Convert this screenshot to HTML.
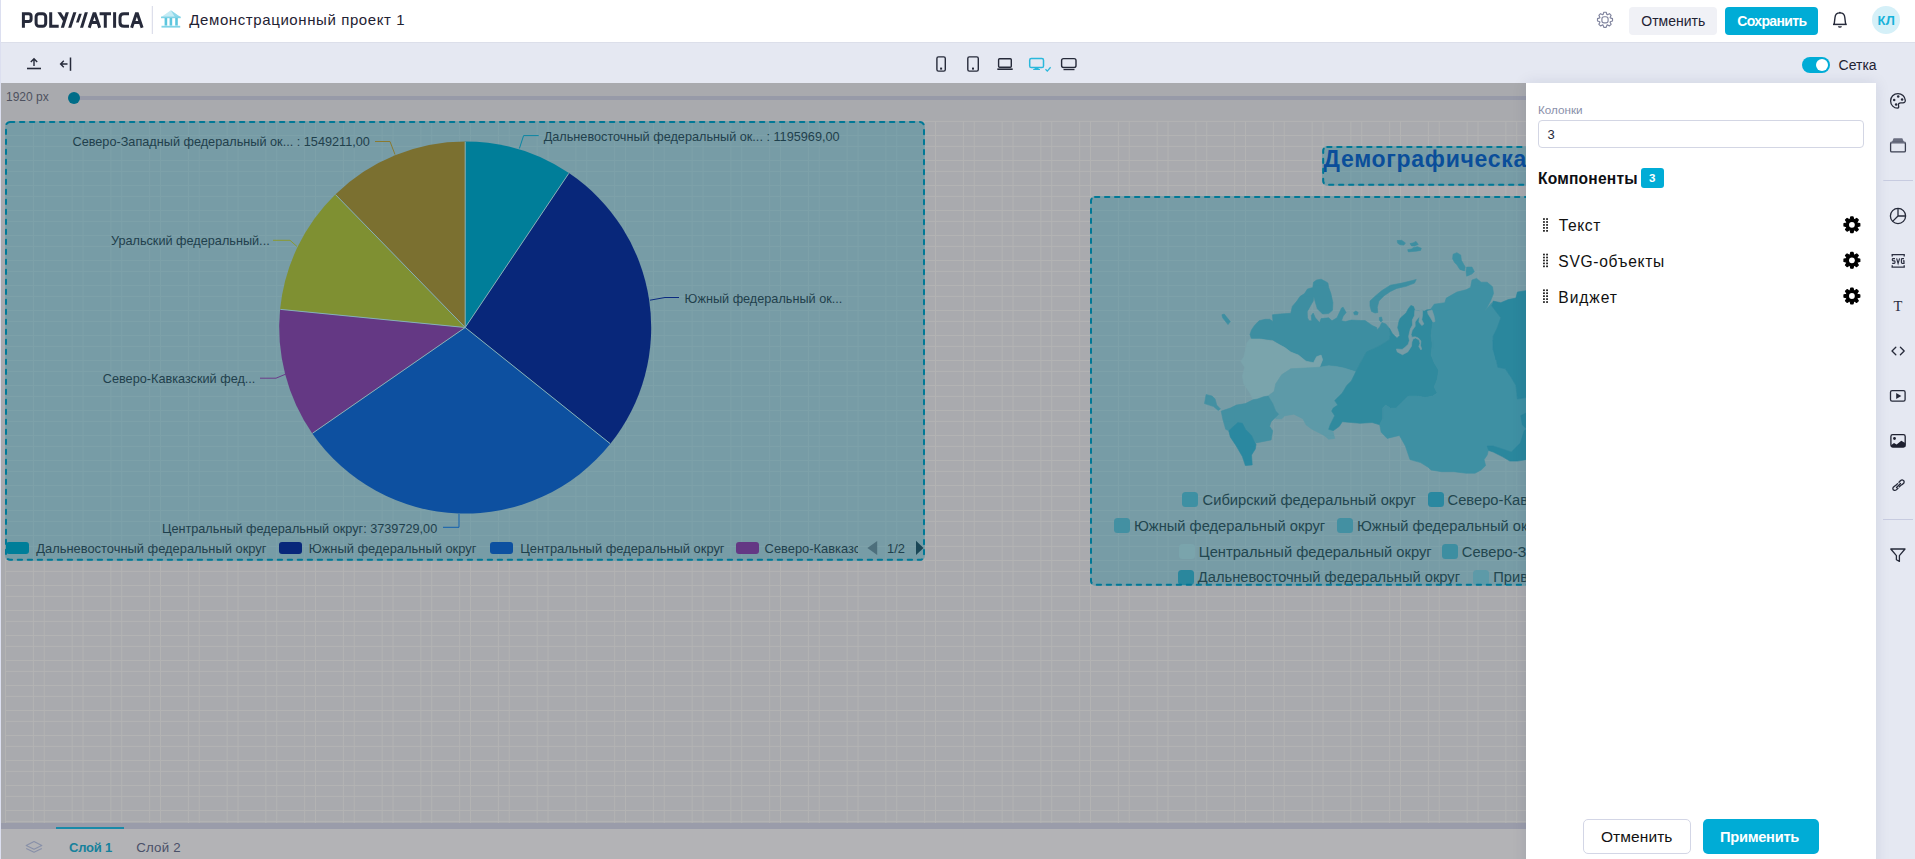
<!DOCTYPE html>
<html><head><meta charset="utf-8">
<style>
*{box-sizing:border-box;margin:0;padding:0}
html,body{width:1915px;height:859px;overflow:hidden;background:#e5e8f2;font-family:"Liberation Sans", sans-serif}
.a{position:absolute}
.t{position:absolute;white-space:nowrap;font-family:"Liberation Sans", sans-serif}
</style></head><body>
<div class="a" style="left:1px;top:0;width:1914px;height:43px;background:#fff;border-bottom:1px solid #dcdfea"></div>
<div class="a" style="left:1px;top:43px;width:1914px;height:40px;background:#e5e8f2"></div>
<div class="a" style="left:1px;top:83px;width:1525px;height:740px;background:#a9aaae;overflow:hidden"></div>
<svg class="a" style="left:0;top:0" width="1526" height="859" viewBox="0 0 1526 859"><path d="M5.50 121.40V823M33.40 121.40V823M44.25 121.40V823M72.15 121.40V823M83.00 121.40V823M110.90 121.40V823M121.75 121.40V823M149.65 121.40V823M160.50 121.40V823M188.40 121.40V823M199.25 121.40V823M227.15 121.40V823M238.00 121.40V823M265.90 121.40V823M276.75 121.40V823M304.65 121.40V823M315.50 121.40V823M343.40 121.40V823M354.25 121.40V823M382.15 121.40V823M393.00 121.40V823M420.90 121.40V823M431.75 121.40V823M459.65 121.40V823M470.50 121.40V823M498.40 121.40V823M509.25 121.40V823M537.15 121.40V823M548.00 121.40V823M575.90 121.40V823M586.75 121.40V823M614.65 121.40V823M625.50 121.40V823M653.40 121.40V823M664.25 121.40V823M692.15 121.40V823M703.00 121.40V823M730.90 121.40V823M741.75 121.40V823M769.65 121.40V823M780.50 121.40V823M808.40 121.40V823M819.25 121.40V823M847.15 121.40V823M858.00 121.40V823M885.90 121.40V823M896.75 121.40V823M924.65 121.40V823M935.50 121.40V823M963.40 121.40V823M974.25 121.40V823M1002.15 121.40V823M1013.00 121.40V823M1040.90 121.40V823M1051.75 121.40V823M1079.65 121.40V823M1090.50 121.40V823M1118.40 121.40V823M1129.25 121.40V823M1157.15 121.40V823M1168.00 121.40V823M1195.90 121.40V823M1206.75 121.40V823M1234.65 121.40V823M1245.50 121.40V823M1273.40 121.40V823M1284.25 121.40V823M1312.15 121.40V823M1323.00 121.40V823M1350.90 121.40V823M1361.75 121.40V823M1389.65 121.40V823M1400.50 121.40V823M1428.40 121.40V823M1439.25 121.40V823M1467.15 121.40V823M1478.00 121.40V823M1505.90 121.40V823M1516.75 121.40V823M5.50 121.40H1530M5.50 135.50H1530M5.50 146.40H1530M5.50 160.50H1530M5.50 171.40H1530M5.50 185.50H1530M5.50 196.40H1530M5.50 210.50H1530M5.50 221.40H1530M5.50 235.50H1530M5.50 246.40H1530M5.50 260.50H1530M5.50 271.40H1530M5.50 285.50H1530M5.50 296.40H1530M5.50 310.50H1530M5.50 321.40H1530M5.50 335.50H1530M5.50 346.40H1530M5.50 360.50H1530M5.50 371.40H1530M5.50 385.50H1530M5.50 396.40H1530M5.50 410.50H1530M5.50 421.40H1530M5.50 435.50H1530M5.50 446.40H1530M5.50 460.50H1530M5.50 471.40H1530M5.50 485.50H1530M5.50 496.40H1530M5.50 510.50H1530M5.50 521.40H1530M5.50 535.50H1530M5.50 546.40H1530M5.50 560.50H1530M5.50 571.40H1530M5.50 585.50H1530M5.50 596.40H1530M5.50 610.50H1530M5.50 621.40H1530M5.50 635.50H1530M5.50 646.40H1530M5.50 660.50H1530M5.50 671.40H1530M5.50 685.50H1530M5.50 696.40H1530M5.50 710.50H1530M5.50 721.40H1530M5.50 735.50H1530M5.50 746.40H1530M5.50 760.50H1530M5.50 771.40H1530M5.50 785.50H1530M5.50 796.40H1530M5.50 810.50H1530M5.50 821.40H1530" stroke="#b3b3b3" stroke-width="1" fill="none"/></svg>
<div class="a" style="left:1px;top:823px;width:1525px;height:6px;background:#9a9caa"></div>
<div class="a" style="left:56px;top:826.5px;width:68px;height:2.5px;background:#1a8aa8"></div>
<div class="a" style="left:1px;top:829px;width:1525px;height:30px;background:#b3b3b6"></div>
<div class="a" style="left:74px;top:96px;width:1452px;height:3.6px;background:#979aa8"></div>
<div class="a" style="left:68px;top:92px;width:12px;height:12px;border-radius:50%;background:#006d88"></div>
<div class="t" style="left:6.00px;top:91.34px;font-size:12px;line-height:12px;color:#4e5260;font-weight:normal;">1920 px</div>
<div class="a" style="left:5px;top:121px;width:920px;height:440px;background:rgba(40,134,154,0.39);border-radius:5px"></div>
<svg class="a" style="left:0;top:0" width="1526" height="859" viewBox="0 0 1526 859"><path d="M465.2 327.5L465.20 141.50A186 186 0 0 1 568.94 173.12Z" fill="#007e99"/><path d="M465.2 327.5L568.94 173.12A186 186 0 0 1 610.36 443.80Z" fill="#08277a"/><path d="M465.2 327.5L610.36 443.80A186 186 0 0 1 312.28 433.39Z" fill="#0d50a0"/><path d="M465.2 327.5L312.28 433.39A186 186 0 0 1 280.09 309.35Z" fill="#643884"/><path d="M465.2 327.5L280.09 309.35A186 186 0 0 1 335.29 194.38Z" fill="#7f9032"/><path d="M465.2 327.5L335.29 194.38A186 186 0 0 1 465.20 141.50Z" fill="#7b7030"/><path d="M465.2 327.5L465.20 141.80M465.2 327.5L568.77 173.37M465.2 327.5L610.13 443.61M465.2 327.5L312.53 433.22M465.2 327.5L280.39 309.38M465.2 327.5L335.50 194.60" stroke="#86b0b8" stroke-width="1" fill="none"/></svg>
<div class="t" style="left:72.50px;top:136.35px;font-size:12.7px;line-height:12.7px;color:#1f404c;font-weight:normal;">Северо-Западный федеральный ок... : 1549211,00</div>
<div class="t" style="left:543.70px;top:131.45px;font-size:12.7px;line-height:12.7px;color:#1f404c;font-weight:normal;">Дальневосточный федеральный ок... : 1195969,00</div>
<div class="t" style="left:110.90px;top:235.45px;font-size:12.7px;line-height:12.7px;color:#1f404c;font-weight:normal;">Уральский федеральный...</div>
<div class="t" style="left:684.60px;top:293.05px;font-size:12.7px;line-height:12.7px;color:#1f404c;font-weight:normal;">Южный федеральный ок...</div>
<div class="t" style="left:102.80px;top:373.45px;font-size:12.7px;line-height:12.7px;color:#1f404c;font-weight:normal;">Северо-Кавказский фед...</div>
<div class="t" style="left:162.00px;top:523.05px;font-size:12.7px;line-height:12.7px;color:#1f404c;font-weight:normal;">Центральный федеральный округ: 3739729,00</div>
<svg class="a" style="left:0;top:0" width="1526" height="859" viewBox="0 0 1526 859"><path d="M519.4 148.5L523.6 135.6H538.7" stroke="#0a86a4" stroke-width="1" fill="none"/><path d="M395 154.5L390 141.5H375" stroke="#8a7a30" stroke-width="1" fill="none"/><path d="M297 246.5L290 240.3H273" stroke="#8a9a30" stroke-width="1" fill="none"/><path d="M650 300.2L665 297.5H679" stroke="#0a2a80" stroke-width="1" fill="none"/><path d="M286 374L276 378.2H260" stroke="#6a3a8a" stroke-width="1" fill="none"/><path d="M459 514V527.3H443" stroke="#1060b0" stroke-width="1" fill="none"/></svg>
<svg class="a" style="left:0;top:0" width="1526" height="859" viewBox="0 0 1526 859"><rect x="6" y="122" width="918" height="437.8" rx="4" fill="none" stroke="#007896" stroke-width="2" stroke-dasharray="4.3 5.7" stroke-linecap="round"/></svg>
<div class="a" style="left:6.1px;top:542.3px;width:23px;height:11.5px;border-radius:3px;background:#007e99"></div>
<div class="a" style="left:279.4px;top:542.3px;width:23px;height:11.5px;border-radius:3px;background:#08277a"></div>
<div class="a" style="left:490.3px;top:542.3px;width:23px;height:11.5px;border-radius:3px;background:#0d50a0"></div>
<div class="a" style="left:735.5px;top:542.3px;width:23px;height:11.5px;border-radius:3px;background:#643884"></div>
<div class="a" style="left:764px;top:538px;width:94px;height:20px;overflow:hidden"><div class="t" style="left:0.60px;top:4.58px;font-size:12.9px;line-height:12.9px;color:#1f404c;font-weight:normal;">Северо-Кавказский федеральный округ</div>
</div>
<div class="t" style="left:36.30px;top:542.58px;font-size:12.9px;line-height:12.9px;color:#1f404c;font-weight:normal;">Дальневосточный федеральный округ</div>
<div class="t" style="left:308.70px;top:542.58px;font-size:12.9px;line-height:12.9px;color:#1f404c;font-weight:normal;">Южный федеральный округ</div>
<div class="t" style="left:520.20px;top:542.58px;font-size:12.9px;line-height:12.9px;color:#1f404c;font-weight:normal;">Центральный федеральный округ</div>
<div class="t" style="left:887.00px;top:542.58px;font-size:12.9px;line-height:12.9px;color:#1f404c;font-weight:normal;">1/2</div>
<svg class="a" style="left:0;top:0" width="1526" height="859" viewBox="0 0 1526 859"><path d="M877.2 540.9V555.1L867.4 548Z" fill="#4d6f7c"/><path d="M916 540.8V555.1L923.5 548Z" fill="#1a4656"/></svg>
<div class="a" style="left:1090px;top:196px;width:500px;height:390px;background:rgba(40,134,154,0.39);border-radius:5px"></div>
<svg class="a" style="left:0;top:0" width="1526" height="859" viewBox="0 0 1526 859"><path d="M1250.0 334.5L1251.5 329.9L1254.5 325.4L1259.0 320.8L1265.1 319.3L1269.6 319.3L1273.0 321.6L1272.4 314.8L1280.2 314.0L1290.8 313.3L1292.3 306.4L1296.9 301.1L1299.9 296.6L1304.5 293.6L1307.5 289.0L1312.8 287.5L1313.5 282.2L1316.6 280.0L1321.1 279.2L1325.6 281.5L1327.9 283.0L1328.7 287.5L1330.9 293.6L1332.9 302.7L1332.5 310.2L1328.7 313.6L1322.6 314.0L1317.3 308.7L1315.0 301.1L1313.8 296.6L1313.2 301.1L1310.5 305.7L1307.2 311.7L1307.5 317.8L1309.0 320.8L1311.7 320.8L1311.3 315.5L1313.2 313.0L1315.3 317.8L1319.6 322.6L1321.1 318.6L1328.7 317.8L1332.0 320.8L1337.0 317.8L1341.5 308.0L1343.1 307.2L1346.1 312.5L1343.1 316.3L1341.5 320.8L1345.3 321.6L1351.4 320.1L1360.5 320.5L1365.0 320.5L1370.0 323.9L1372.1 325.4L1376.7 327.6L1377.0 329.9L1379.7 326.9L1381.9 322.6L1385.7 323.9L1389.5 328.4L1390.4 334.4L1389.4 339.7L1381.0 345.0L1372.6 349.2L1366.3 353.4L1366.5 352.1L1360.5 362.7L1355.9 371.8L1343.8 368.0L1336.2 366.5L1328.7 365.7L1319.6 367.2L1322.6 359.7L1321.1 355.1L1316.6 356.7L1313.5 362.7L1306.0 361.2L1298.4 355.1L1290.8 352.1L1284.8 347.6L1272.7 340.0L1260.6 339.0L1254.5 342.8L1251.5 339.0Z" fill="#3d8ea1" stroke="#3d8ea1" stroke-width="0.6" stroke-linejoin="round"/><path d="M1221.9 314.8L1224.2 314.0L1227.2 317.8L1230.3 321.6L1228.0 324.6L1225.0 320.8L1222.7 317.8Z" fill="#3d8ea1" stroke="#3d8ea1" stroke-width="0.6" stroke-linejoin="round"/><path d="M1353.6 312.5L1355.9 311.0L1358.2 312.5L1357.4 314.8L1354.4 314.8Z" fill="#3d8ea1" stroke="#3d8ea1" stroke-width="0.6" stroke-linejoin="round"/><path d="M1371.5 311.4L1370.0 306.0L1370.0 301.0L1375.7 295.7L1382.0 290.5L1390.4 285.2L1401.9 283.1L1412.4 280.5L1416.2 279.5L1414.5 283.1L1406.1 286.3L1396.7 288.4L1390.4 291.5L1384.1 295.7L1378.9 301.0L1377.3 307.3L1377.8 312.5L1375.0 313.0Z" fill="#3d8ea1" stroke="#3d8ea1" stroke-width="0.6" stroke-linejoin="round"/><path d="M1379.4 317.5L1381.5 317.0L1382.4 320.5L1380.9 322.0L1379.4 320.1Z" fill="#3d8ea1" stroke="#3d8ea1" stroke-width="0.6" stroke-linejoin="round"/><path d="M1397.1 240.6L1401.6 240.3L1405.4 242.9L1403.9 245.1L1400.1 244.8L1397.8 243.3Z" fill="#3d8ea1" stroke="#3d8ea1" stroke-width="0.6" stroke-linejoin="round"/><path d="M1407.7 249.7L1411.5 248.9L1413.7 247.4L1417.5 246.7L1421.3 248.2L1420.6 250.4L1416.0 251.2L1412.2 251.5L1408.4 251.9Z" fill="#3d8ea1" stroke="#3d8ea1" stroke-width="0.6" stroke-linejoin="round"/><path d="M1410.0 243.6L1413.0 242.9L1416.0 241.4L1418.3 244.4L1414.5 245.9L1411.5 245.9Z" fill="#3d8ea1" stroke="#3d8ea1" stroke-width="0.6" stroke-linejoin="round"/><path d="M1250.0 339.0L1260.6 339.0L1272.7 341.3L1284.8 347.6L1290.8 352.1L1298.4 355.1L1306.0 361.2L1313.5 362.7L1316.6 356.7L1321.1 355.1L1322.6 359.7L1319.6 367.2L1306.0 368.0L1290.8 368.8L1281.7 374.8L1275.7 383.9L1274.2 391.5L1268.1 396.0L1263.6 396.8L1257.5 399.0L1253.0 399.8L1250.0 393.0L1243.9 383.9L1242.4 376.3L1244.7 367.2L1240.9 361.2L1243.9 356.7L1245.4 350.6L1246.9 343.0Z" fill="#7aa4ac" stroke="#7aa4ac" stroke-width="0.6" stroke-linejoin="round"/><path d="M1274.2 391.5L1275.7 383.9L1281.7 374.8L1290.8 368.8L1306.0 368.0L1319.6 367.2L1328.7 365.7L1336.2 366.5L1343.8 368.0L1355.9 371.8L1351.4 380.9L1346.8 385.4L1342.3 393.0L1334.7 400.6L1337.8 405.1L1333.2 408.1L1331.7 411.1L1334.7 415.7L1330.2 424.8L1328.7 429.3L1333.2 432.3L1334.7 438.4L1328.7 439.2L1324.1 435.4L1318.1 432.3L1312.0 429.3L1306.0 424.8L1302.9 418.7L1293.9 414.2L1284.8 415.7L1281.7 418.7L1275.7 418.7L1275.7 411.1L1272.7 403.6L1268.1 396.0Z" fill="#5d9aa8" stroke="#5d9aa8" stroke-width="0.6" stroke-linejoin="round"/><path d="M1221.2 411.1L1230.3 408.1L1236.3 405.1L1245.4 403.6L1253.0 399.8L1257.5 399.0L1263.6 396.8L1268.1 396.0L1272.7 403.6L1275.7 411.1L1278.7 414.2L1271.1 421.7L1269.6 426.3L1272.7 430.8L1271.1 439.9L1263.6 441.4L1256.0 442.9L1251.5 435.4L1245.4 429.3L1242.4 423.3L1237.8 422.5L1228.8 430.8L1225.7 429.3L1222.7 418.7Z" fill="#4390a2" stroke="#4390a2" stroke-width="0.6" stroke-linejoin="round"/><path d="M1206.1 394.5L1212.1 396.0L1215.1 399.0L1216.7 405.1L1220.4 408.9L1218.2 410.4L1213.6 406.6L1209.1 405.1L1204.5 403.6L1205.3 399.0Z" fill="#4390a2" stroke="#4390a2" stroke-width="0.6" stroke-linejoin="round"/><path d="M1228.8 430.8L1237.8 422.5L1242.4 423.3L1245.4 429.3L1251.5 435.4L1256.0 444.5L1255.3 449.0L1251.5 455.0L1252.2 464.9L1245.4 465.6L1242.4 456.6L1236.3 446.0L1230.3 436.9Z" fill="#2a88a0" stroke="#2a88a0" stroke-width="0.6" stroke-linejoin="round"/><path d="M1397.0 338.2L1399.8 335.4L1399.1 331.9L1397.7 327.7L1399.1 320.7L1400.5 317.9L1406.1 313.0L1408.2 308.9L1410.9 305.4L1413.5 306.5L1414.8 310.3L1419.3 311.0L1421.5 310.0L1424.0 311.2L1427.0 309.8L1430.0 309.6L1432.7 308.7L1432.7 320.8L1431.1 336.0L1432.7 348.1L1432.7 340.0L1431.1 355.1L1434.2 362.7L1438.7 370.3L1437.2 379.4L1434.2 386.9L1437.2 393.0L1432.7 396.0L1425.1 397.5L1417.5 396.0L1408.4 396.0L1402.4 402.1L1396.3 408.1L1390.3 408.1L1385.7 405.1L1382.7 408.1L1382.7 418.7L1379.7 424.8L1372.1 422.5L1360.0 423.3L1351.4 422.5L1342.3 421.7L1339.3 426.3L1333.2 430.8L1328.7 429.3L1330.2 424.8L1334.7 415.7L1331.7 411.1L1333.2 408.1L1337.8 405.1L1334.7 400.6L1342.3 393.0L1346.8 385.4L1351.4 380.9L1355.9 371.8L1360.5 362.7L1366.5 352.1L1372.6 349.2L1381.0 345.0L1389.4 339.7L1390.4 334.4L1389.5 328.6L1392.5 333.7Z" fill="#308a9e" stroke="#308a9e" stroke-width="0.6" stroke-linejoin="round"/><path d="M1431.1 308.7L1434.2 304.2L1444.8 302.7L1446.3 298.1L1456.9 292.1L1466.0 289.8L1470.5 287.5L1472.0 280.0L1476.6 278.4L1481.1 282.2L1487.2 282.2L1492.5 286.8L1493.5 293.6L1490.5 301.1L1487.2 307.2L1484.1 311.4L1488.7 306.4L1491.7 302.7L1491.7 305.7L1496.2 311.7L1500.8 317.8L1497.0 328.4L1493.2 336.0L1493.2 349.6L1493.2 340.0L1494.7 352.1L1497.8 367.2L1505.3 368.8L1511.4 377.8L1515.9 385.4L1517.4 399.0L1526.5 397.5L1526.5 444.5L1520.5 444.5L1511.4 452.0L1502.3 449.0L1493.2 446.0L1488.7 449.0L1487.2 455.0L1484.1 459.6L1485.6 465.6L1481.1 470.0L1475.0 473.2L1466.0 473.2L1453.9 471.7L1441.7 471.7L1431.1 470.0L1428.1 467.2L1420.6 462.6L1410.0 459.6L1405.4 446.0L1399.4 435.4L1387.2 438.4L1381.2 432.3L1379.7 424.8L1382.7 418.7L1382.7 408.1L1385.7 405.1L1390.3 408.1L1396.3 408.1L1402.4 402.1L1408.4 396.0L1417.5 396.0L1425.1 397.5L1432.7 396.0L1437.2 393.0L1434.2 386.9L1437.2 379.4L1438.7 370.3L1434.2 362.7L1431.1 355.1L1432.7 340.0L1432.7 348.1L1431.1 336.0L1432.7 320.8Z" fill="#3e90a3" stroke="#3e90a3" stroke-width="0.6" stroke-linejoin="round"/><path d="M1453.1 254.2L1456.9 252.7L1460.7 255.0L1461.4 260.3L1465.2 267.1L1464.5 270.9L1459.9 269.4L1456.9 264.8L1454.6 262.5L1452.6 258.8Z" fill="#3e90a3" stroke="#3e90a3" stroke-width="0.6" stroke-linejoin="round"/><path d="M1466.7 267.1L1472.0 267.1L1474.3 271.6L1472.0 273.9L1466.7 276.2L1466.0 270.9Z" fill="#3e90a3" stroke="#3e90a3" stroke-width="0.6" stroke-linejoin="round"/><path d="M1517.4 292.1L1526.5 290.6L1526.5 360.0L1526.5 397.5L1517.4 399.0L1515.9 385.4L1511.4 377.8L1505.3 368.8L1497.8 367.2L1494.7 352.1L1493.2 340.0L1496.2 360.0L1493.2 349.6L1493.2 336.0L1497.0 328.4L1500.8 317.8L1496.2 311.7L1491.7 305.7L1493.2 301.1L1500.8 302.7L1508.3 299.6L1515.9 298.1Z" fill="#2a879d" stroke="#2a879d" stroke-width="0.6" stroke-linejoin="round"/><path d="M1487.2 446.0L1493.2 446.0L1502.3 449.0L1511.4 452.0L1520.5 442.9L1524.2 430.8L1526.5 429.3L1526.5 459.6L1517.4 461.1L1509.9 461.1L1502.3 456.6L1493.2 452.0L1488.7 450.5Z" fill="#2a879d" stroke="#2a879d" stroke-width="0.6" stroke-linejoin="round"/><path d="M1526.5 412.7L1520.8 415.7L1522.3 424.8L1526.5 428.6Z" fill="#2a879d" stroke="#2a879d" stroke-width="0.6" stroke-linejoin="round"/><path d="M1414.8 310.3L1414.4 315.8L1412.3 320.0L1412.5 325.0L1410.3 329.1L1408.6 336.4L1409.4 340.5L1408.2 344.2L1405.4 347.0L1402.1 349.4L1396.4 349.0L1397.2 351.9L1402.5 354.7L1407.8 351.9L1411.5 346.2L1411.9 342.1L1413.1 338.9L1415.6 338.0L1419.2 340.1L1420.0 343.3L1418.8 346.6L1420.9 349.9L1421.7 349.0L1420.5 345.4L1420.9 340.9L1418.4 338.0L1415.2 336.8L1411.9 337.2L1411.1 334.4L1412.3 330.3L1415.2 326.2L1415.1 322.0L1416.5 320.0L1419.3 316.5L1420.7 313.0L1419.3 311.0Z" fill="#779ca6" stroke="#779ca6" stroke-width="0.6" stroke-linejoin="round"/><path d="M1419.8 309.5L1422.5 309.5L1422.6 314.6L1421.8 319.8L1423.9 324.0L1421.8 325.6L1418.9 322.0L1419.6 315.0Z" fill="#779ca6" stroke="#779ca6" stroke-width="0.6" stroke-linejoin="round"/><path d="M1427.5 311.0L1432.0 310.0L1434.0 316.0L1435.0 321.5L1433.0 322.0L1430.0 317.0L1428.0 314.0Z" fill="#779ca6" stroke="#779ca6" stroke-width="0.6" stroke-linejoin="round"/></svg>
<div class="a" style="left:1182.1px;top:492.10px;width:15.8px;height:15.4px;border-radius:3.5px;background:#3e90a3"></div>
<div class="t" style="left:1202.60px;top:492.86px;font-size:14.7px;line-height:14.7px;color:#22464f;font-weight:normal;">Сибирский федеральный округ</div>
<div class="a" style="left:1428.2px;top:492.10px;width:15.8px;height:15.4px;border-radius:3.5px;background:#2a88a0"></div>
<div class="t" style="left:1447.60px;top:492.86px;font-size:14.7px;line-height:14.7px;color:#22464f;font-weight:normal;">Северо-Кавказский федеральный округ</div>
<div class="a" style="left:1114.0px;top:517.90px;width:15.8px;height:15.4px;border-radius:3.5px;background:#4390a2"></div>
<div class="t" style="left:1134.00px;top:518.96px;font-size:14.7px;line-height:14.7px;color:#22464f;font-weight:normal;">Южный федеральный округ</div>
<div class="a" style="left:1337.0px;top:517.90px;width:15.8px;height:15.4px;border-radius:3.5px;background:#4390a2"></div>
<div class="t" style="left:1357.00px;top:518.96px;font-size:14.7px;line-height:14.7px;color:#22464f;font-weight:normal;">Южный федеральный округ</div>
<div class="a" style="left:1179.0px;top:543.90px;width:15.8px;height:15.4px;border-radius:3.5px;background:#7aa4ac"></div>
<div class="t" style="left:1198.80px;top:545.16px;font-size:14.7px;line-height:14.7px;color:#22464f;font-weight:normal;">Центральный федеральный округ</div>
<div class="a" style="left:1442.0px;top:543.90px;width:15.8px;height:15.4px;border-radius:3.5px;background:#3d8ea1"></div>
<div class="t" style="left:1461.80px;top:545.16px;font-size:14.7px;line-height:14.7px;color:#22464f;font-weight:normal;">Северо-Западный федеральный округ</div>
<div class="a" style="left:1178.0px;top:569.70px;width:15.8px;height:15.4px;border-radius:3.5px;background:#2a879d"></div>
<div class="t" style="left:1197.80px;top:570.46px;font-size:14.7px;line-height:14.7px;color:#22464f;font-weight:normal;">Дальневосточный федеральный округ</div>
<div class="a" style="left:1472.8px;top:569.70px;width:15.8px;height:15.4px;border-radius:3.5px;background:#5d9aa8"></div>
<div class="t" style="left:1493.30px;top:570.46px;font-size:14.7px;line-height:14.7px;color:#22464f;font-weight:normal;">Приволжский федеральный округ</div>
<svg class="a" style="left:0;top:0" width="1526" height="859" viewBox="0 0 1526 859"><rect x="1091" y="197" width="600" height="387.8" rx="4" fill="none" stroke="#007896" stroke-width="2" stroke-dasharray="4.3 5.7" stroke-linecap="round"/></svg>
<div class="a" style="left:1322.2px;top:145.9px;width:300px;height:40px;background:rgba(40,134,154,0.39);border-radius:5px"></div>
<div class="t" style="left:1323.60px;top:148.13px;font-size:23px;line-height:23px;color:#0a4e9a;font-weight:bold;letter-spacing:0.7px;">Демографическая ситуация</div>
<svg class="a" style="left:0;top:0" width="1526" height="859" viewBox="0 0 1526 859"><rect x="1323.2" y="146.9" width="400" height="37.9" rx="4" fill="none" stroke="#007896" stroke-width="2" stroke-dasharray="4.3 5.7" stroke-linecap="round"/></svg>
<div class="a" style="left:1876px;top:83px;width:39px;height:776px;background:#e5e8f2"></div>
<div class="a" style="left:1526px;top:83px;width:350px;height:800px;background:#fff;box-shadow:0 0 14px rgba(20,30,80,0.10)"></div>
<div class="a" style="left:0;top:0;width:1px;height:859px;background:#dcdff0"></div>
<svg class="a" style="left:0;top:0" width="200" height="42" viewBox="0 0 200 42"><g fill="none" stroke="#262a3a" stroke-width="3" stroke-linejoin="miter" stroke-miterlimit="3"><path d="M23.4 27.8V13.7H28.6Q31.1 13.7 31.1 16.3V18.9Q31.1 21.5 28.6 21.5H23.4"/><rect x="36.1" y="13.7" width="9.6" height="12.6" rx="3"/><path d="M50.7 12.2V26.3H58.7"/></g><g fill="#262a3a"><path d="M65.7 12.2H68.9L64 27.8H60.8Z M57.4 12.2H61L65.6 19.6L63.9 22.6Z M73.3 12.2H76.4L71.3 27.8H68.2Z M79 13.8H81.8L78.8 22.6H76Z M84.8 12.2H87.9L83.1 27.8H80Z"/></g><g fill="none" stroke="#262a3a" stroke-width="3" stroke-linejoin="miter" stroke-miterlimit="3"><path d="M89.2 27.8L93.9 13.7H95L99.7 27.8M91.4 22.6H97.5"/><path d="M99.6 13.7H111M105.3 13.7V27.8"/><path d="M114.6 12.2V27.8"/><path d="M129 13.7H124Q120 13.7 120 17.5V22.5Q120 26.3 124 26.3H129"/><path d="M131.6 27.8L136.3 13.7H137.4L142.1 27.8M133.8 22.6H139.9"/></g><path d="M152.3 6V34" stroke="#d5d8e6" stroke-width="1"/><path d="M161 17.3L170.8 10.2L180.7 17.3Z" fill="#c5ecf5"/><path d="M170.8 10.2L180.7 17.3H175Z" fill="#8ed8ea"/><rect x="161" y="16.6" width="19.7" height="1.6" fill="#7fd3e6"/><g fill="#5cc6de"><rect x="164.6" y="18" width="2.6" height="7.6"/><rect x="169.6" y="18" width="2.6" height="7.6"/><rect x="175.2" y="18" width="2.6" height="7.6"/></g><rect x="161.5" y="25.8" width="18.7" height="1.8" fill="#7fd3e6"/></svg>
<div class="t" style="left:189.30px;top:12.10px;font-size:15px;line-height:15px;color:#1f2233;font-weight:normal;letter-spacing:0.6px;">Демонстрационный проект 1</div>
<svg class="a" style="left:1580px;top:0" width="60" height="42" viewBox="1580 0 60 42"><path d="M1603.07 14.54L1603.83 12.29L1606.17 12.29L1606.93 14.54L1607.35 14.72L1609.49 13.67L1611.13 15.31L1610.08 17.45L1610.26 17.87L1612.51 18.63L1612.51 20.97L1610.26 21.73L1610.08 22.15L1611.13 24.29L1609.49 25.93L1607.35 24.88L1606.93 25.06L1606.17 27.31L1603.83 27.31L1603.07 25.06L1602.65 24.88L1600.51 25.93L1598.87 24.29L1599.92 22.15L1599.74 21.73L1597.49 20.97L1597.49 18.63L1599.74 17.87L1599.92 17.45L1598.87 15.31L1600.51 13.67L1602.65 14.72Z" fill="none" stroke="#80849e" stroke-width="1.15" stroke-linejoin="round"/><rect x="1601.9" y="16.7" width="6.2" height="6.2" rx="2.2" fill="none" stroke="#80849e" stroke-width="1.15"/></svg>
<div class="a" style="left:1629px;top:7px;width:88px;height:28px;border-radius:4px;background:#f0f1f6"></div>
<div class="t" style="left:1641.30px;top:13.75px;font-size:14px;line-height:14px;color:#1f2233;font-weight:normal;">Отменить</div>
<div class="a" style="left:1725px;top:7px;width:93px;height:28px;border-radius:4px;background:#00acd6"></div>
<div class="t" style="left:1737.30px;top:13.75px;font-size:14px;line-height:14px;color:#ffffff;font-weight:bold;letter-spacing:-0.65px;">Сохранить</div>
<svg class="a" style="left:1825px;top:0" width="30" height="42" viewBox="1825 0 30 42"><path d="M1834.2 24.2L1835 17.5Q1835.3 12.9 1839.9 12.9Q1844.5 12.9 1844.8 17.5L1845.6 24.2" fill="none" stroke="#262a3a" stroke-width="1.4"/><path d="M1833 24.4H1846.8" stroke="#262a3a" stroke-width="1.5"/><path d="M1837.8 26.3H1842Q1841.5 27.8 1839.9 27.8Q1838.3 27.8 1837.8 26.3Z" fill="#262a3a"/><circle cx="1839.9" cy="12.6" r="0.9" fill="#262a3a"/></svg>
<div class="a" style="left:1871.8px;top:5.8px;width:28px;height:28px;border-radius:50%;background:#d5f0f8"></div>
<div class="t" style="left:1877.40px;top:13.80px;font-size:13px;line-height:13px;color:#15b2da;font-weight:bold;letter-spacing:0.3px;">КЛ</div>
<svg class="a" style="left:0;top:43px" width="1915" height="40" viewBox="0 43 1915 40"><g stroke="#262a3a" fill="none" stroke-width="1.4"><path d="M27 68.5H41" stroke-width="1.6"/><path d="M34 66V59M30.8 62L34 58.8L37.2 62"/><path d="M70.5 57.5V70.8" stroke-width="1.5"/><path d="M67.5 64H61M63.8 60.8L60.6 64L63.8 67.2"/><rect x="936.9" y="56.9" width="8.4" height="14.2" rx="1.6"/><rect x="967.8" y="56.9" width="10.5" height="14.2" rx="1.6"/><rect x="998.6" y="58.7" width="12.7" height="8.6" rx="1"/><path d="M997.3 69.2H1012.7" stroke-width="1.6"/><rect x="1061.6" y="58.6" width="14.4" height="8.9" rx="2"/><path d="M1063.5 69.6H1074.5" stroke-width="1.2"/></g><rect x="940.1" y="67.6" width="2" height="2" fill="#262a3a"/><rect x="972" y="67.6" width="2" height="2" fill="#262a3a"/><g stroke="#2ab8dc" fill="none" stroke-width="1.5"><rect x="1029.7" y="58.6" width="13.8" height="8.9" rx="1.6"/><path d="M1045.5 69.3L1047.3 71.1L1050.6 67.3" stroke-width="1.3"/></g><path d="M1035 67.5H1038.2L1038.8 69H1040V70H1033.2V69H1034.4Z" fill="#2ab8dc"/></svg>
<div class="a" style="left:1802px;top:56.8px;width:28px;height:16.2px;border-radius:8.1px;background:#00acd6"></div>
<div class="a" style="left:1815.6px;top:58.8px;width:12.2px;height:12.2px;border-radius:50%;background:#fff"></div>
<div class="t" style="left:1838.60px;top:57.95px;font-size:14px;line-height:14px;color:#1f2233;font-weight:normal;">Сетка</div>
<div class="t" style="left:1538.00px;top:103.60px;font-size:11.7px;line-height:11.7px;color:#8a90aa;font-weight:normal;">Колонки</div>
<div class="a" style="left:1538px;top:120px;width:326px;height:28px;border:1px solid #d3d6e4;border-radius:4px;background:#fff"></div>
<div class="t" style="left:1547.50px;top:127.50px;font-size:13px;line-height:13px;color:#262a3a;font-weight:normal;">3</div>
<div class="t" style="left:1538.00px;top:170.79px;font-size:15.6px;line-height:15.6px;color:#0d0f14;font-weight:bold;letter-spacing:0.2px;">Компоненты</div>
<div class="a" style="left:1640.8px;top:167.9px;width:23.3px;height:19.8px;border-radius:3px;background:#00acd6"></div>
<div class="t" style="left:1649.00px;top:173.07px;font-size:11.5px;line-height:11.5px;color:#ffffff;font-weight:bold;">3</div>
<svg class="a" style="left:1526px;top:83px" width="350" height="776" viewBox="1526 83 350 776"><rect x="1543.10" y="218.20" width="1.7" height="1.7" fill="#111"/><rect x="1546.20" y="218.20" width="1.7" height="1.7" fill="#111"/><rect x="1543.10" y="221.15" width="1.7" height="1.7" fill="#111"/><rect x="1546.20" y="221.15" width="1.7" height="1.7" fill="#111"/><rect x="1543.10" y="224.10" width="1.7" height="1.7" fill="#111"/><rect x="1546.20" y="224.10" width="1.7" height="1.7" fill="#111"/><rect x="1543.10" y="227.05" width="1.7" height="1.7" fill="#111"/><rect x="1546.20" y="227.05" width="1.7" height="1.7" fill="#111"/><rect x="1543.10" y="230.00" width="1.7" height="1.7" fill="#111"/><rect x="1546.20" y="230.00" width="1.7" height="1.7" fill="#111"/><path d="M1850.14 219.48L1850.78 216.88L1853.02 216.88L1853.66 219.48L1854.41 219.80L1856.71 218.41L1858.29 219.99L1856.90 222.29L1857.22 223.04L1859.82 223.68L1859.82 225.92L1857.22 226.56L1856.90 227.31L1858.29 229.61L1856.71 231.19L1854.41 229.80L1853.66 230.12L1853.02 232.72L1850.78 232.72L1850.14 230.12L1849.39 229.80L1847.09 231.19L1845.51 229.61L1846.90 227.31L1846.58 226.56L1843.98 225.92L1843.98 223.68L1846.58 223.04L1846.90 222.29L1845.51 219.99L1847.09 218.41L1849.39 219.80Z" fill="#000" stroke="#000" stroke-width="1.2" stroke-linejoin="round"/><circle cx="1851.9" cy="224.8" r="2.9" fill="#fff"/><rect x="1543.10" y="253.70" width="1.7" height="1.7" fill="#111"/><rect x="1546.20" y="253.70" width="1.7" height="1.7" fill="#111"/><rect x="1543.10" y="256.65" width="1.7" height="1.7" fill="#111"/><rect x="1546.20" y="256.65" width="1.7" height="1.7" fill="#111"/><rect x="1543.10" y="259.60" width="1.7" height="1.7" fill="#111"/><rect x="1546.20" y="259.60" width="1.7" height="1.7" fill="#111"/><rect x="1543.10" y="262.55" width="1.7" height="1.7" fill="#111"/><rect x="1546.20" y="262.55" width="1.7" height="1.7" fill="#111"/><rect x="1543.10" y="265.50" width="1.7" height="1.7" fill="#111"/><rect x="1546.20" y="265.50" width="1.7" height="1.7" fill="#111"/><path d="M1850.14 254.98L1850.78 252.38L1853.02 252.38L1853.66 254.98L1854.41 255.30L1856.71 253.91L1858.29 255.49L1856.90 257.79L1857.22 258.54L1859.82 259.18L1859.82 261.42L1857.22 262.06L1856.90 262.81L1858.29 265.11L1856.71 266.69L1854.41 265.30L1853.66 265.62L1853.02 268.22L1850.78 268.22L1850.14 265.62L1849.39 265.30L1847.09 266.69L1845.51 265.11L1846.90 262.81L1846.58 262.06L1843.98 261.42L1843.98 259.18L1846.58 258.54L1846.90 257.79L1845.51 255.49L1847.09 253.91L1849.39 255.30Z" fill="#000" stroke="#000" stroke-width="1.2" stroke-linejoin="round"/><circle cx="1851.9" cy="260.3" r="2.9" fill="#fff"/><rect x="1543.10" y="289.40" width="1.7" height="1.7" fill="#111"/><rect x="1546.20" y="289.40" width="1.7" height="1.7" fill="#111"/><rect x="1543.10" y="292.35" width="1.7" height="1.7" fill="#111"/><rect x="1546.20" y="292.35" width="1.7" height="1.7" fill="#111"/><rect x="1543.10" y="295.30" width="1.7" height="1.7" fill="#111"/><rect x="1546.20" y="295.30" width="1.7" height="1.7" fill="#111"/><rect x="1543.10" y="298.25" width="1.7" height="1.7" fill="#111"/><rect x="1546.20" y="298.25" width="1.7" height="1.7" fill="#111"/><rect x="1543.10" y="301.20" width="1.7" height="1.7" fill="#111"/><rect x="1546.20" y="301.20" width="1.7" height="1.7" fill="#111"/><path d="M1850.14 290.68L1850.78 288.08L1853.02 288.08L1853.66 290.68L1854.41 291.00L1856.71 289.61L1858.29 291.19L1856.90 293.49L1857.22 294.24L1859.82 294.88L1859.82 297.12L1857.22 297.76L1856.90 298.51L1858.29 300.81L1856.71 302.39L1854.41 301.00L1853.66 301.32L1853.02 303.92L1850.78 303.92L1850.14 301.32L1849.39 301.00L1847.09 302.39L1845.51 300.81L1846.90 298.51L1846.58 297.76L1843.98 297.12L1843.98 294.88L1846.58 294.24L1846.90 293.49L1845.51 291.19L1847.09 289.61L1849.39 291.00Z" fill="#000" stroke="#000" stroke-width="1.2" stroke-linejoin="round"/><circle cx="1851.9" cy="296.0" r="2.9" fill="#fff"/></svg>
<div class="t" style="left:1558.80px;top:218.49px;font-size:15.6px;line-height:15.6px;color:#111111;font-weight:normal;letter-spacing:0.56px;">Текст</div>
<div class="t" style="left:1558.30px;top:253.99px;font-size:15.6px;line-height:15.6px;color:#111111;font-weight:normal;letter-spacing:0.7px;">SVG-объекты</div>
<div class="t" style="left:1558.30px;top:289.69px;font-size:15.6px;line-height:15.6px;color:#111111;font-weight:normal;letter-spacing:0.95px;">Виджет</div>
<div class="a" style="left:1583.3px;top:819.2px;width:107.3px;height:35.3px;border:1px solid #d3d6e6;border-radius:5px;background:#fff"></div>
<div class="t" style="left:1600.90px;top:828.98px;font-size:15.5px;line-height:15.5px;color:#111111;font-weight:normal;letter-spacing:0.1px;">Отменить</div>
<div class="a" style="left:1703px;top:819.2px;width:115.7px;height:35.3px;border-radius:5px;background:#00acd6"></div>
<div class="t" style="left:1720.00px;top:829.66px;font-size:14.7px;line-height:14.7px;color:#ffffff;font-weight:bold;letter-spacing:-0.3px;">Применить</div>
<svg class="a" style="left:0;top:829px" width="200" height="30" viewBox="0 829 200 30"><g fill="none" stroke="#8890a8" stroke-width="1.1" stroke-linejoin="round"><path d="M26.2 845.4L34 841.6L41.8 845.4L34 849.2Z"/><path d="M26.2 848.5L34 852.3L41.8 848.5"/></g></svg>
<div class="t" style="left:69.00px;top:841.00px;font-size:13px;line-height:13px;color:#16819c;font-weight:bold;letter-spacing:-0.2px;">Слой 1</div>
<div class="t" style="left:136.20px;top:840.74px;font-size:13.3px;line-height:13.3px;color:#4a5068;font-weight:normal;letter-spacing:0.2px;">Слой 2</div>
<svg class="a" style="left:1876px;top:83px" width="39" height="776" viewBox="1876 83 39 776"><g fill="none" stroke="#262a3a" stroke-width="1.3" stroke-linejoin="round" stroke-linecap="round"><path d="M1898 93.6C1893.6 93.6 1890.6 96.9 1890.6 100.9C1890.6 105 1894 108.2 1897.4 108.2C1899 108.2 1898.8 106.6 1898.5 105.4C1898.1 103.8 1899.2 102.8 1900.7 102.8H1903C1904.5 102.8 1905.4 101.8 1905.3 100.4C1905 96.4 1901.9 93.6 1898 93.6Z"/></g><g fill="#262a3a"><circle cx="1898.2" cy="96.6" r="1.25"/><circle cx="1894.2" cy="100.1" r="1.25"/><circle cx="1902.1" cy="99.4" r="1.25"/><circle cx="1896.1" cy="104.5" r="1.25"/></g><path d="M1891.8 142.5L1893.6 138.3H1902.3L1904.2 142.5Z" fill="#6a6e80"/><rect x="1890.6" y="142.5" width="14.8" height="9.4" rx="1.2" fill="none" stroke="#3a3e50" stroke-width="1.3"/><path d="M1890.6 142.5H1905.4" stroke="#6a6e80" stroke-width="1.6"/><path d="M1883.3 180.5H1913" stroke="#c7cbe0" stroke-width="1"/><g fill="none" stroke="#262a3a" stroke-width="1.3"><circle cx="1898" cy="216" r="7.6"/><path d="M1898 208.4V216H1905.6M1898 216L1892.6 221.4"/></g><g fill="none" stroke="#2a2e40" stroke-width="1.3"><path d="M1892.2 256.6V254.6H1904.2V256.6M1892.2 265.2V267.2H1904.2V265.2"/></g><path d="M1895 258.6H1893.1Q1892.3 258.6 1892.3 259.5V260.1Q1892.3 260.9 1893.1 260.9H1894.2Q1895 260.9 1895 261.8V262.5Q1895 263.4 1894.2 263.4H1892.2M1896.6 258.3L1898.1 263.4L1899.6 258.3M1904 258.6H1902.3Q1901.4 258.6 1901.4 259.5V262.5Q1901.4 263.4 1902.3 263.4H1904V260.9H1902.9" fill="none" stroke="#2a2e40" stroke-width="1.15"/><text x="1898" y="311" font-family="Liberation Serif" font-size="14.5" text-anchor="middle" fill="#2a2e40">T</text><g fill="none" stroke="#262a3a" stroke-width="1.3" stroke-linecap="round" stroke-linejoin="round"><path d="M1895.8 347.2L1892 351L1895.8 354.8M1900.4 347.2L1904.2 351L1900.4 354.8"/><rect x="1890.5" y="390.6" width="14.6" height="10.6" rx="1.6"/><path d="M1897.6 483.6L1896.2 485C1894.8 486.4 1892.6 486.4 1892.8 488.6C1893 490.6 1895.2 491 1896.6 489.6L1898 488.2M1899.4 486.8L1900.8 485.4C1902.2 484 1904.4 484 1904.2 481.8C1904 479.8 1901.8 479.4 1900.4 480.8L1899 482.2M1896.5 487.5L1900.5 483.5"/><path d="M1890.8 549H1905L1899.4 555.6V561.4L1896.4 559.8V555.6Z"/></g><path d="M1896.2 392.9V399.1L1901.3 396Z" fill="#262a3a"/><rect x="1890.9" y="434.6" width="14.3" height="12.4" rx="1.8" fill="none" stroke="#1e2030" stroke-width="1.3"/><path d="M1891 445.3L1894 443L1896.6 444.4L1901.3 440.8L1905.2 442.9V447H1891Z" fill="#1e2030"/><circle cx="1894.5" cy="438.5" r="1.4" fill="#1e2030"/><path d="M1883 519.5H1913" stroke="#c7cbe0" stroke-width="1"/></svg>
</body></html>
